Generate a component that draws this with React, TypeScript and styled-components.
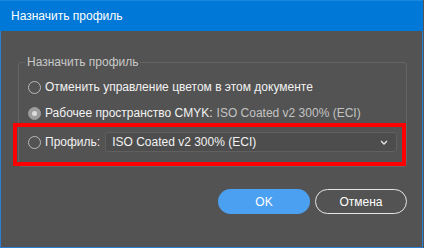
import React from "react";
import styled, { createGlobalStyle } from "styled-components";

const Global = createGlobalStyle`
  html, body { margin: 0; padding: 0; background: #535353; }
  body { font-family: "Liberation Sans", Arial, sans-serif; }
`;

const Window = styled.div`
  box-sizing: border-box;
  width: 423px;
  height: 248px;
  background: #535353;
  border: 1px solid #2a7fd4;
  border-top: none;
  display: flex;
  flex-direction: column;
`;

const TitleBar = styled.div`
  height: 31px;
  background: #0078d7;
  border-top: 1px solid #1a86dc;
  box-sizing: border-box;
  margin: 0 -1px;
  display: flex;
  align-items: center;
  padding-left: 11px;
  color: #ffffff;
  font-size: 12px;
`;

const Body = styled.div`
  flex: 1;
  display: flex;
  flex-direction: column;
  padding: 23px 15px 0 17px;
`;

const GroupBox = styled.fieldset`
  margin: 0;
  padding: 6px 9px 14px 9px;
  border: 1px solid #646464;
  border-radius: 3px;
  width: 389px;
  box-sizing: border-box;
  display: flex;
  flex-direction: column;
  gap: 4px;
`;

const Legend = styled.legend`
  margin-left: -3px;
  padding: 0 2px;
  font-size: 12px;
  line-height: 16px;
  color: #c9c9c9;
`;

const Row = styled.label<{ $h?: number }>`
  display: flex;
  align-items: center;
  height: ${(p) => p.$h ?? 22}px;
  color: #f2f2f2;
  font-size: 12px;
  position: relative;
`;

const Highlight = styled(Row)`
  margin-top: 4px;
  &::after {
    content: "";
    position: absolute;
    left: -15px;
    right: -9px;
    top: -9px;
    bottom: -14px;
    border: 4px solid #ff0000;
    pointer-events: none;
  }
`;

const Radio = styled.span<{ $checked?: boolean }>`
  box-sizing: border-box;
  width: 13px;
  height: 13px;
  border-radius: 50%;
  border: 1.5px solid ${(p) => (p.$checked ? "#9d9d9d" : "#b9b9b9")};
  background: ${(p) => (p.$checked ? "#9d9d9d" : "transparent")};
  margin-right: 4px;
  flex-shrink: 0;
  display: flex;
  align-items: center;
  justify-content: center;
  &::before {
    content: "";
    width: 5px;
    height: 5px;
    border-radius: 50%;
    background: ${(p) => (p.$checked ? "#dcdcdc" : "transparent")};
  }
`;

const Muted = styled.span`
  color: #c3c3c3;
  margin-left: 4px;
`;

const Select = styled.div`
  box-sizing: border-box;
  margin-left: 5px;
  width: 292px;
  height: 20px;
  border: 1px solid #606060;
  border-radius: 3px;
  background: #4d4d4d;
  display: flex;
  align-items: center;
  justify-content: space-between;
  padding: 0 8px 0 6px;
  color: #f2f2f2;
  font-size: 12px;
`;

const Buttons = styled.div`
  display: flex;
  justify-content: flex-end;
  gap: 5px;
  margin-top: 22px;
`;

const Button = styled.button<{ $primary?: boolean }>`
  box-sizing: border-box;
  width: 92px;
  height: 25px;
  border-radius: 13px;
  font-family: "Liberation Sans", Arial, sans-serif;
  font-size: 12px;
  color: #ffffff;
  background: ${(p) => (p.$primary ? "#4ba0f1" : "transparent")};
  border: ${(p) => (p.$primary ? "none" : "1.5px solid #e6e6e6")};
  padding: 0;
`;

export default function App() {
  return (
    <>
      <Global />
      <Window>
        <TitleBar>Назначить профиль</TitleBar>
        <Body>
          <GroupBox>
            <Legend>Назначить профиль</Legend>
            <Row>
              <Radio />
              Отменить управление цветом в этом документе
            </Row>
            <Row>
              <Radio $checked />
              Рабочее пространство CMYK:
              <Muted>ISO Coated v2 300% (ECI)</Muted>
            </Row>
            <Highlight $h={20}>
              <Radio />
              Профиль:
              <Select>
                <span>ISO Coated v2 300% (ECI)</span>
                <svg width="8" height="5" viewBox="0 0 8 5">
                  <path d="M1 1 L4 4 L7 1" fill="none" stroke="#e8e8e8" strokeWidth="1.3" />
                </svg>
              </Select>
            </Highlight>
          </GroupBox>
          <Buttons>
            <Button $primary>OK</Button>
            <Button>Отмена</Button>
          </Buttons>
        </Body>
      </Window>
    </>
  );
}
